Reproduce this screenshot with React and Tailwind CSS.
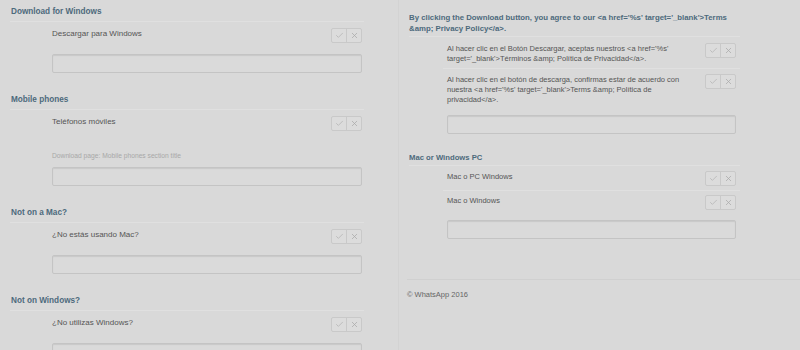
import React from 'react';
import { Check, X } from 'lucide-react';

const font = { fontFamily: '"Liberation Sans", Arial, sans-serif' };

const Actions = () => (
  <div className="flex shrink-0 h-[15px] rounded-[2px] border border-[#c9c9c9] bg-[#dcdcdc]">
    <div className="w-[15px] flex items-center justify-center border-r border-[#c9c9c9]">
      <Check className="w-[9px] h-[9px] text-[#b3b3b3]" strokeWidth={2} />
    </div>
    <div className="w-[14px] flex items-center justify-center">
      <X className="w-[9px] h-[9px] text-[#a9a9a9]" strokeWidth={2} />
    </div>
  </div>
);

const Field = ({ className = '' }) => (
  <div className={`h-[19px] rounded-[2px] border border-[#c4c4c4] bg-[#dadada] shadow-[inset_0_1px_1px_rgba(0,0,0,0.08)] ${className}`} />
);

// left column section
const Section = ({ title, text, hint }) => (
  <div className="mt-[21px] first:mt-0">
    <div className="text-[8.2px] leading-[12px] font-bold text-[#4d6a7c] pb-[3px] pl-[1px] border-b border-[#e0e0e0]">
      {title}
    </div>
    <div className="pl-[42px] pr-[2px]">
      <div className="flex items-start justify-between pt-[6px]">
        <div className="mt-[1px] text-[8px] leading-[10px] text-[#555]">{text}</div>
        <Actions />
      </div>
      {hint && (
        <div className="mt-[21px] text-[6.7px] leading-[8px] text-[#a8a8a8]">{hint}</div>
      )}
      <Field className={hint ? 'mt-[7px]' : 'mt-[11px]'} />
    </div>
  </div>
);

const Row = ({ children, pt = 'pt-[5px]', border = true }) => (
  <div className={`flex items-start justify-between pl-[4px] pr-[4px] ${pt} pb-[4px] ${border ? 'border-b border-[#e0e0e0]' : ''}`}>
    <div className="mt-[1px] text-[7.5px] leading-[10px] text-[#555] w-[256px]">{children}</div>
    <Actions />
  </div>
);

export default function App() {
  const sections = [
    { title: 'Download for Windows', text: 'Descargar para Windows' },
    {
      title: 'Mobile phones',
      text: 'Teléfonos móviles',
      hint: 'Download page: Mobile phones section title',
    },
    { title: 'Not on a Mac?', text: '¿No estás usando Mac?' },
    { title: 'Not on Windows?', text: '¿No utilizas Windows?' },
  ];

  return (
    <div className="w-[800px] h-[350px] overflow-hidden bg-[#d9d9d9] flex" style={font}>
      <div className="w-[399px] shrink-0 border-r border-[#d3d3d3] pt-[6px] pl-[10px] pr-[34px]">
        {sections.map((s) => (
          <Section key={s.title} {...s} />
        ))}
      </div>

      <div className="flex-1 pt-[12px]">
        <div className="pl-[10px] w-[341px]">
          <div className="text-[7.8px] leading-[11px] font-bold text-[#4d6a7c] pb-[2px] border-b border-[#e0e0e0]">
            By clicking the Download button, you agree to our &lt;a href='%s' target='_blank'&gt;Terms &amp;amp; Privacy Policy&lt;/a&gt;.
          </div>
          <div className="pl-[34px]">
            <Row pt="pt-[6px]">
              Al hacer clic en el Botón Descargar, aceptas nuestros &lt;a href='%s' target='_blank'&gt;Términos &amp;amp; Política de Privacidad&lt;/a&gt;.
            </Row>
            <Row border={false}>
              Al hacer clic en el botón de descarga, confirmas estar de acuerdo con nuestra &lt;a href='%s' target='_blank'&gt;Terms &amp;amp; Política de privacidad&lt;/a&gt;.
            </Row>
            <Field className="mt-[6px] ml-[4px] mr-[4px]" />
          </div>

          <div className="mt-[18px] text-[7.7px] leading-[11px] font-bold text-[#4d6a7c] pb-[2px] border-b border-[#e0e0e0]">
            Mac or Windows PC
          </div>
          <div className="pl-[34px]">
            <Row>Mac o PC Windows</Row>
            <Row pt="pt-[4px]" border={false}>Mac o Windows</Row>
            <Field className="mt-[6px] ml-[4px] mr-[4px]" />
          </div>
        </div>

        <div className="mt-[40px] ml-[8px] border-t border-[#d0d0d0] pt-[10px] text-[7.5px] leading-[10px] text-[#666]">
          © WhatsApp 2016
        </div>
      </div>
    </div>
  );
}
